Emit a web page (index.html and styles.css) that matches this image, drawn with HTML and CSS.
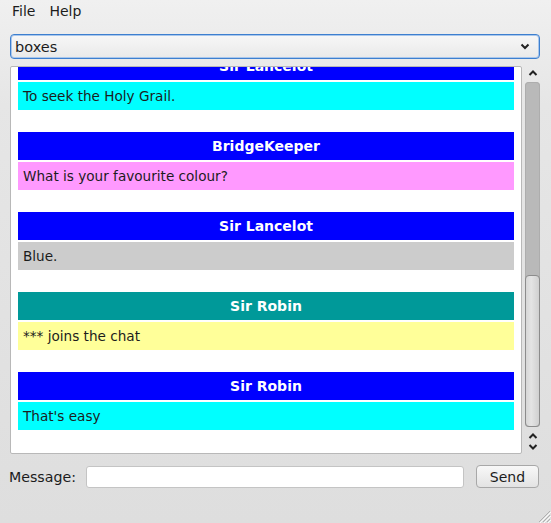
FILE: index.html
```html
<!DOCTYPE html>
<html>
<head>
<meta charset="utf-8">
<link rel="stylesheet" href="styles.css">
</head>
<body>
<div class="window">
  <div class="menubar">
    <span class="menu-item">File</span>
    <span class="menu-item">Help</span>
  </div>
  <div class="combo">
    <span class="combo-text">boxes</span>
    <svg class="combo-arrow" width="10" height="7" viewBox="0 0 10 7"><path d="M1.5 1.5 L5 5 L8.5 1.5" fill="none" stroke="#222" stroke-width="2"/></svg>
  </div>
  <div class="chat-row">
    <div class="chat-frame">
      <div class="chat-content">
        <div class="msg">
          <div class="msg-head blue">Sir Lancelot</div>
          <div class="msg-body cyan">To seek the Holy Grail.</div>
        </div>
        <div class="msg">
          <div class="msg-head blue">BridgeKeeper</div>
          <div class="msg-body pink">What is your favourite colour?</div>
        </div>
        <div class="msg">
          <div class="msg-head blue">Sir Lancelot</div>
          <div class="msg-body grey">Blue.</div>
        </div>
        <div class="msg">
          <div class="msg-head teal">Sir Robin</div>
          <div class="msg-body yellow">*** joins the chat</div>
        </div>
        <div class="msg">
          <div class="msg-head blue">Sir Robin</div>
          <div class="msg-body cyan">That's easy</div>
        </div>
      </div>
    </div>
    <div class="scrollbar">
      <svg class="chev" width="10" height="8" viewBox="0 0 10 8"><path d="M1.5 6 L5 2.5 L8.5 6" fill="none" stroke="#222" stroke-width="2"/></svg>
      <div class="track">
        <div class="thumb"></div>
      </div>
      <div class="arrows-bottom">
        <svg class="chev" width="10" height="8" viewBox="0 0 10 8"><path d="M1.5 6 L5 2.5 L8.5 6" fill="none" stroke="#222" stroke-width="2"/></svg>
        <svg class="chev" width="10" height="8" viewBox="0 0 10 8"><path d="M1.5 2 L5 5.5 L8.5 2" fill="none" stroke="#222" stroke-width="2"/></svg>
      </div>
    </div>
  </div>
  <div class="input-row">
    <span class="label">Message:</span>
    <div class="text-input"></div>
    <div class="button">Send</div>
  </div>
  <div class="bottom">
    <svg class="grip" width="16" height="16" viewBox="0 0 16 16">
      <path d="M15 4 L4 15 M15 8 L8 15 M15 12 L12 15" stroke="#b0b0b0" stroke-width="1"/>
      <path d="M16 5 L5 16 M16 9 L9 16 M16 13 L13 16" stroke="#fafafa" stroke-width="1"/>
    </svg>
  </div>
</div>
</body>
</html>
```

FILE: styles.css
```css
html, body {
  margin: 0;
  padding: 0;
}
body {
  width: 551px;
  height: 523px;
  overflow: hidden;
  font-family: "DejaVu Sans", sans-serif;
  font-size: 13.33px;
  color: #1c1c1c;
}
.window {
  width: 551px;
  height: 523px;
  background: linear-gradient(#f0f0f0, #e6e6e6 20%, #dedede);
  display: flex;
  flex-direction: column;
}
.menubar {
  height: 22px;
  display: flex;
  align-items: center;
  padding-left: 12px;
  gap: 14px;
  font-size: 14px;
}
.combo {
  margin: 12px 11px 0 10px;
  height: 23px;
  border: 1px solid #3d7fcf;
  border-radius: 4px;
  background: linear-gradient(#f7f7f7, #e9e9e9);
  box-shadow: inset 0 0 0 1px #a9c7ec;
  display: flex;
  align-items: center;
  justify-content: space-between;
  padding: 0 9px 0 4px;
}
.combo-text {
  font-size: 14.5px;
}
.chat-row {
  margin-top: 7px;
  height: 388px;
  display: flex;
  padding-left: 10px;
}
.chat-frame {
  width: 510px;
  height: 386px;
  border: 1px solid #b8b8b8;
  border-radius: 2px;
  background: #fff;
  overflow: hidden;
  display: flex;
  flex-direction: column;
  justify-content: flex-end;
}
.chat-content {
  padding: 0 7px 1px 7px;
  flex-shrink: 0;
}
.msg {
  margin-bottom: 22px;
}
.msg-head {
  height: 28px;
  line-height: 28px;
  text-align: center;
  color: #fff;
  font-weight: bold;
  font-size: 14px;
}
.msg-body {
  margin-top: 2px;
  height: 28px;
  line-height: 28px;
  padding-left: 5px;
  font-size: 13.6px;
}
.blue { background: #0000ff; }
.teal { background: #009999; }
.cyan { background: #00ffff; }
.pink { background: #ff99ff; }
.grey { background: #cccccc; }
.yellow { background: #ffff99; }

.scrollbar {
  width: 17px;
  margin-left: 2px;
  display: flex;
  flex-direction: column;
  align-items: center;
}
.chev {
  display: block;
}
.scrollbar > .chev {
  margin-top: 3px;
  height: 8px;
}
.track {
  margin-top: 5px;
  width: 15px;
  height: 345px;
  border-radius: 4px;
  background: #b9b9b9;
  box-shadow: inset 0 0 0 1px #adadad;
  display: flex;
  flex-direction: column;
  justify-content: flex-end;
}
.thumb {
  height: 152px;
  border: 1px solid #8c8c8c;
  border-radius: 4px;
  background: linear-gradient(90deg, #d7d7d7, #e4e4e4 40%, #d0d0d0);
  box-sizing: border-box;
}
.arrows-bottom {
  margin-top: 5px;
  display: flex;
  flex-direction: column;
  gap: 3px;
}
.input-row {
  margin-top: 11px;
  height: 23px;
  display: flex;
  align-items: center;
  padding-left: 9px;
}
.label {
  width: 77px;
  font-size: 14.2px;
}
.text-input {
  width: 376px;
  height: 20px;
  background: #fff;
  border: 1px solid #c4c4c4;
  border-radius: 3px;
}
.button {
  margin-left: 12px;
  width: 61px;
  height: 21px;
  border: 1px solid #a8a8a8;
  border-radius: 4px;
  background: linear-gradient(#f8f8f8, #e3e3e3);
  display: flex;
  align-items: center;
  justify-content: center;
  font-size: 14px;
}
.bottom {
  flex: 1;
  display: flex;
  justify-content: flex-end;
  align-items: flex-end;
}
.grip {
  display: block;
}
```
